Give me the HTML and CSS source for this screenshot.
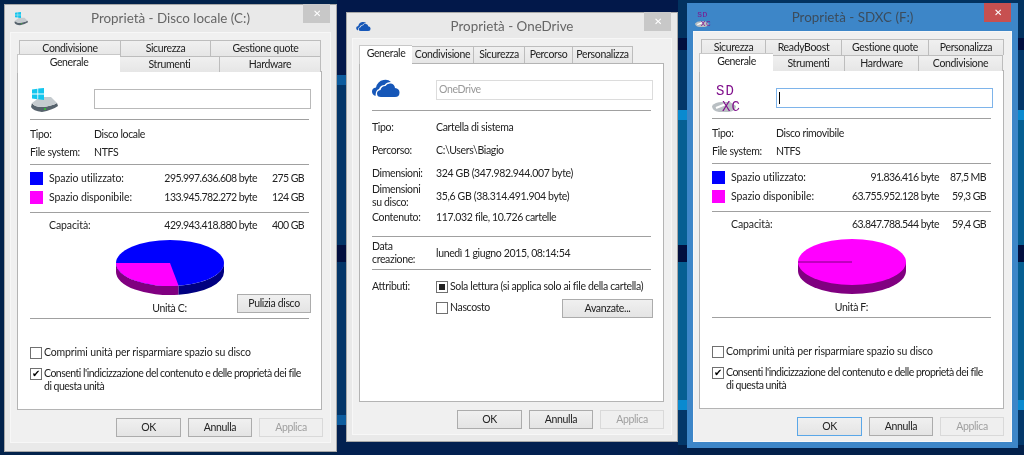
FILE: index.html
```html
<!DOCTYPE html>
<html>
<head>
  <title>Proprietà</title>
  <link rel="stylesheet" href="styles.css">
</head>
<body>

  <svg class="defs" width="0" height="0">
    <symbol id="ico-drive" viewBox="0 0 28 25">
      <path d="M2 15 Q4 19 12 19 Q22 18 27 15 L28 18 Q22 22 12 24 Q3 23 1 19 Z" fill="#56626c"/>
      <path d="M2 15 L10 9 H21 L27 15 Q22 18 12 19 Q4 19 2 15 Z" fill="#c5cbcf"/>
      <rect x="14" y="20" width="2" height="2" fill="#35b53a"/>
    </symbol>
    <symbol id="ico-win" viewBox="0 0 12 12">
      <path d="M0 1.5 L5.4 .7 V5.6 H0 Z M6.2 .6 L12 0 V5.6 H6.2 Z M0 6.4 H5.4 V11.2 L0 10.5 Z M6.2 6.4 H12 V12 L6.2 11.3 Z" fill="#14c6ee"/>
    </symbol>
    <symbol id="ico-cloud" viewBox="0 0 28 19">
      <path d="M3.5 18 Q0 16.5 0 13.5 Q0 10 4 9.5 Q5.5 3 11.5 2 Q16 1 19 4 Q14.5 4 12.5 7 Q8.5 7 7 11 Q3.5 12 3.5 18 Z" fill="#1657b8"/>
      <path d="M9 19 Q5 19 5 15.5 Q5 12.5 8.5 12 Q9.5 8 13.5 8 Q15 5 19 5.5 Q22.5 6 23 10 Q27.5 10.5 27.5 14.5 Q27.5 19 23 19 Z" fill="#1657b8"/>
    </symbol>
    <symbol id="ico-disc" viewBox="0 0 30 32">
      <path d="M0 24 Q3 20 10 20 H18 L24 24 Q24 29 17 30 H7 Q0 29 0 24 Z" fill="#b9bfc3"/>
      <path d="M4 26 L14 22" stroke="#fff" stroke-width="2"/>
    </symbol>
  </svg>

  <!-- finestra disco C -->
  <section class="win win-c">
    <header class="titlebar">
      <span class="title-icon">
        <svg class="small-drive"><use href="#ico-drive"/></svg>
        <svg class="small-win"><use href="#ico-win"/></svg>
      </span>
      <span class="title">Proprietà - Disco locale (C:)</span>
      <span class="close">✕</span>
    </header>
    <div class="panel">
      <div class="tabs">
        <div class="tab-row back tabs-c-top">
          <span class="tab">Condivisione</span>
          <span class="tab">Sicurezza</span>
          <span class="tab">Gestione quote</span>
        </div>
        <div class="tab-row tabs-c-bottom">
          <span class="tab active">Generale</span>
          <span class="tab">Strumenti</span>
          <span class="tab">Hardware</span>
        </div>
      </div>
      <div class="page">
        <div class="head">
          <span class="big-icon">
            <svg class="big-drive"><use href="#ico-drive"/></svg>
            <svg class="big-win"><use href="#ico-win"/></svg>
          </span>
          <div class="namebox"></div>
        </div>
        <hr>
        <div class="info first"><span>Tipo:</span><span>Disco locale</span></div>
        <div class="info"><span>File system:</span><span>NTFS</span></div>
        <hr class="sep-stats">
        <div class="stat"><i class="swatch used"></i><span>Spazio utilizzato:</span><span class="num">295.997.636.608 byte</span><span class="num">275 GB</span></div>
        <div class="stat"><i class="swatch free"></i><span>Spazio disponibile:</span><span class="num">133.945.782.272 byte</span><span class="num">124 GB</span></div>
        <hr class="sep-cap">
        <div class="stat capacity"><i></i><span>Capacità:</span><span class="num">429.943.418.880 byte</span><span class="num">400 GB</span></div>
        <div class="chart">
          <svg class="pie" viewBox="0 0 108 55">
            <path d="M0 23 v9 A54 23 0 0 0 62.6 54.7 v-9 A54 23 0 0 1 0 23 Z" fill="#800080"/>
            <path d="M62.6 45.7 v9 A54 23 0 0 0 108 32 v-9 A54 23 0 0 1 62.6 45.7 Z" fill="#000080"/>
            <ellipse cx="54" cy="23" rx="54" ry="23" fill="#0000ff"/>
            <path d="M54 23 L0 23 A54 23 0 0 0 62.6 45.7 Z" fill="#ff00ff"/>
          </svg>
          <span class="unit">Unità C:</span>
          <button class="btn clean">Pulizia disco</button>
        </div>
        <hr class="sep-chart">
        <label class="check first-check"><i class="box"></i><span>Comprimi unità per risparmiare spazio su disco</span></label>
        <label class="check index-check"><i class="box checked">✔</i><span>Consenti l'indicizzazione del contenuto e delle proprietà dei file<br>di questa unità</span></label>
      </div>
      <footer class="actions">
        <button class="btn">OK</button>
        <button class="btn">Annulla</button>
        <button class="btn off">Applica</button>
      </footer>
    </div>
  </section>

  <!-- finestra OneDrive -->
  <section class="win win-o">
    <header class="titlebar">
      <span class="title-icon"><svg class="small-cloud"><use href="#ico-cloud"/></svg></span>
      <span class="title">Proprietà - OneDrive</span>
      <span class="close">✕</span>
    </header>
    <div class="panel">
      <div class="tabs">
        <div class="tab-row tabs-o">
          <span class="tab active">Generale</span>
          <span class="tab">Condivisione</span>
          <span class="tab">Sicurezza</span>
          <span class="tab">Percorso</span>
          <span class="tab">Personalizza</span>
        </div>
      </div>
      <div class="page page-o">
        <div class="head">
          <span class="big-icon"><svg class="big-cloud"><use href="#ico-cloud"/></svg></span>
          <div class="namebox muted">OneDrive</div>
        </div>
        <hr>
        <div class="info o-first"><span>Tipo:</span><span>Cartella di sistema</span></div>
        <div class="info o-row"><span>Percorso:</span><span>C:\Users\Biagio</span></div>
        <div class="info o-row"><span>Dimensioni:</span><span>324 GB (347.982.944.007 byte)</span></div>
        <div class="info o-double"><span>Dimensioni<br>su disco:</span><span>35,6 GB (38.314.491.904 byte)</span></div>
        <div class="info o-last"><span>Contenuto:</span><span>117.032 file, 10.726 cartelle</span></div>
        <hr class="sep-date">
        <div class="info o-double o-date"><span>Data<br>creazione:</span><span>lunedì 1 giugno 2015, 08:14:54</span></div>
        <hr class="sep-attr">
        <div class="attrs">
          <span>Attributi:</span>
          <div class="attr-list">
            <label class="check"><i class="box partial"></i><span>Sola lettura (si applica solo ai file della cartella)</span></label>
            <div class="attr-last">
              <label class="check"><i class="box"></i><span>Nascosto</span></label>
              <button class="btn advanced">Avanzate...</button>
            </div>
          </div>
        </div>
      </div>
      <footer class="actions">
        <button class="btn">OK</button>
        <button class="btn">Annulla</button>
        <button class="btn off">Applica</button>
      </footer>
    </div>
  </section>

  <!-- finestra SDXC, attiva -->
  <section class="win win-f">
    <header class="titlebar">
      <span class="title-icon">
        <svg class="small-sd" viewBox="0 0 30 32">
          <use href="#ico-disc" width="30" height="32"/>
          <text x="4" y="13" class="sd-text">SD</text>
          <text x="10" y="29" class="sd-text">XC</text>
        </svg>
      </span>
      <span class="title">Proprietà - SDXC (F:)</span>
      <span class="close">✕</span>
    </header>
    <div class="panel">
      <div class="tabs">
        <div class="tab-row back tabs-f-top">
          <span class="tab">Sicurezza</span>
          <span class="tab">ReadyBoost</span>
          <span class="tab">Gestione quote</span>
          <span class="tab">Personalizza</span>
        </div>
        <div class="tab-row tabs-f-bottom">
          <span class="tab active">Generale</span>
          <span class="tab">Strumenti</span>
          <span class="tab">Hardware</span>
          <span class="tab">Condivisione</span>
        </div>
      </div>
      <div class="page">
        <div class="head">
          <span class="big-icon">
            <svg class="big-sd" viewBox="0 0 30 32">
              <use href="#ico-disc" width="30" height="32"/>
              <text x="4" y="13" class="sd-text">SD</text>
              <text x="10" y="29" class="sd-text">XC</text>
            </svg>
          </span>
          <div class="namebox focus"><i class="caret"></i></div>
        </div>
        <hr>
        <div class="info first"><span>Tipo:</span><span>Disco rimovibile</span></div>
        <div class="info"><span>File system:</span><span>NTFS</span></div>
        <hr class="sep-stats">
        <div class="stat"><i class="swatch used"></i><span>Spazio utilizzato:</span><span class="num">91.836.416 byte</span><span class="num">87,5 MB</span></div>
        <div class="stat"><i class="swatch free"></i><span>Spazio disponibile:</span><span class="num">63.755.952.128 byte</span><span class="num">59,3 GB</span></div>
        <hr class="sep-cap">
        <div class="stat capacity"><i></i><span>Capacità:</span><span class="num">63.847.788.544 byte</span><span class="num">59,4 GB</span></div>
        <div class="chart">
          <svg class="pie" viewBox="0 0 108 55">
            <path d="M0 23 v9 A54 23 0 0 0 108 32 v-9 Z" fill="#800080"/>
            <ellipse cx="54" cy="23" rx="54" ry="23" fill="#ff00ff"/>
            <path d="M0 23 H54" stroke="#800080" stroke-width="1"/>
          </svg>
          <span class="unit">Unità F:</span>
        </div>
        <hr class="sep-chart">
        <label class="check first-check"><i class="box"></i><span>Comprimi unità per risparmiare spazio su disco</span></label>
        <label class="check index-check"><i class="box checked">✔</i><span>Consenti l'indicizzazione del contenuto e delle proprietà dei file<br>di questa unità</span></label>
      </div>
      <footer class="actions">
        <button class="btn default">OK</button>
        <button class="btn">Annulla</button>
        <button class="btn off">Applica</button>
      </footer>
    </div>
  </section>

</body>
</html>
```

FILE: styles.css
```css
* {
  box-sizing: border-box;
}

html, body {
  height: 100%;
}

body {
  margin: 0;
  overflow: hidden;
  position: relative;
  font: 10.5px/13px Lato, "Open Sans", sans-serif;
  letter-spacing: -.35px;
  color: #222;
  background-color: #03234c;
  background-image:
    linear-gradient(180deg,
      #023260 0, #023260 38px, #010f3f 38px, #010f3f 50px, #03386a 50px, #03386a 110px,
      #0a8ad0 110px, #0a8ad0 120px, #065f92 120px, #065f92 245px, #010f3f 245px, #010f3f 262px,
      #065f92 262px, #065f92 400px, #0a8ad0 400px, #0a8ad0 410px, #03386a 410px, #03386a 445px, #02204a 445px),
    linear-gradient(180deg,
      #02184a 0, #02184a 75px, #0d5c9e 75px, #0d5c9e 85px, #033568 85px, #033568 245px,
      #010f3f 245px, #010f3f 262px, #033568 262px, #033568 415px, #0d5c9e 415px, #0d5c9e 425px,
      #022050 425px);
  background-repeat: no-repeat;
  background-size: 346px 455px, 342px 455px;
  background-position: 678px 0, 337px 0;
}

.defs {
  position: absolute;
}

/* finestre */
.win {
  position: absolute;
  display: flex;
  flex-direction: column;
  background: #e9e9e9;
  border: 1px solid #a8a8a8;
  filter: blur(.35px);
}

.win-c {
  left: 4px;
  top: 4px;
  width: 333px;
  height: 448px;
}

.win-o {
  left: 346px;
  top: 12px;
  width: 332px;
  height: 430px;
}

.win-f {
  left: 687px;
  top: 3px;
  width: 331px;
  height: 445px;
  background: #3d86c8;
  border-color: #3d86c8;
}

.titlebar {
  height: 27px;
  flex: none;
  display: flex;
  justify-content: center;
  padding-top: 3px;
  position: relative;
}

.win-o .titlebar {
  height: 25px;
}

.title {
  font-size: 13.4px;
  line-height: 20px;
  letter-spacing: 0;
  color: #666;
}

.win-f .title {
  color: #3c4c5c;
}

.title-icon {
  position: absolute;
  left: 8px;
  top: 6px;
  width: 16px;
  height: 16px;
}

.title-icon svg {
  position: absolute;
}

.small-drive {
  left: 1px;
  top: 2px;
  width: 14px;
  height: 13px;
}

.small-win {
  left: 2px;
  top: 1px;
  width: 6px;
  height: 6px;
}

.small-cloud {
  left: 1px;
  top: 2px;
  width: 15px;
  height: 10px;
}

.small-sd {
  left: -1px;
  top: 0;
  width: 17px;
  height: 18px;
}

.close {
  position: absolute;
  right: 6px;
  top: -1px;
  width: 27px;
  height: 19px;
  background: #c8c8c8;
  color: #fff;
  font-size: 10px;
  line-height: 19px;
  text-align: center;
}

.win-f .close {
  background: #c75050;
}

.panel {
  flex: 1;
  margin: 0 5px 8px 5px;
  padding: 7px 7px 0 6px;
  background: #f0f0f0;
  border: 1px solid #f7f7f7;
}

.win-o .panel {
  margin-bottom: 6px;
}

.win-f .panel {
  padding-left: 5px;
  margin-bottom: 5px;
}

/* linguette */
.tab-row {
  display: grid;
  height: 15px;
  position: relative;
}

.tab-row.back {
  height: 16px;
  margin-left: 2px;
}

.tabs-c-top {
  grid-template-columns: 102px 90px 110px;
}

.tabs-c-bottom {
  grid-template-columns: 103px 100px 101px;
}

.tabs-f-top {
  grid-template-columns: 65px 76px 87px 75px;
}

.tabs-f-bottom {
  grid-template-columns: 74px 72px 74px 84px;
}

.tabs-o {
  height: 17px;
  margin-left: 1px;
  grid-template-columns: 52px 62px 51px 48px 60px;
}

.tab {
  border: 1px solid #bdbdbd;
  border-bottom: 0;
  border-left: 0;
  background: linear-gradient(#f0f0f0, #e6e6e6);
  text-align: center;
  line-height: 15px;
  white-space: nowrap;
}

.tab:first-child {
  border-left: 1px solid #bdbdbd;
}

.tab.active {
  margin: -2px 0 -1px 0;
  background: #fff;
  border-color: #c8c8c8;
  border-right: 0;
  position: relative;
  line-height: 14px;
}

.tabs-o .tab.active {
  margin: -1px 0 -1px -1px;
}

/* pagina */
.page {
  width: 305px;
  height: 339px;
  padding: 17px 10px 0 12px;
  background: #fff;
  border: 1px solid #b4b4b4;
}

.page-o {
  padding-top: 16px;
}

.head {
  display: flex;
  height: 20px;
  gap: 36px;
  width: 281px;
}

.big-icon {
  width: 28px;
  height: 25px;
  flex: none;
  position: relative;
}

.big-icon svg {
  position: absolute;
}

.big-drive {
  left: 0;
  top: -1px;
  width: 28px;
  height: 25px;
}

.big-win {
  left: 2px;
  top: -1px;
  width: 12px;
  height: 12px;
}

.big-cloud {
  left: 0;
  top: -2px;
  width: 28px;
  height: 19px;
}

.big-sd {
  left: 0;
  top: -6px;
  width: 30px;
  height: 32px;
}

.sd-text {
  font: 14px "Liberation Mono", monospace;
  letter-spacing: 1px;
  fill: #80108c;
}

.namebox {
  flex: 1;
  border: 1px solid #b9b9b9;
  background: #fff;
  padding: 2px 2px;
}

.namebox.muted {
  color: #999;
  border-color: #dcdcdc;
}

.namebox.focus {
  border-color: #7eb4ea;
  padding: 3px 2px;
}

.caret {
  display: block;
  width: 1px;
  height: 12px;
  background: #000;
}

hr {
  width: 279px;
  height: 1px;
  margin: 10px 0 0 0;
  border: 0;
  background: #a0a0a0;
}

.info {
  display: grid;
  grid-template-columns: 64px 1fr;
  align-items: center;
  height: 18px;
}

.info.first {
  margin-top: 5px;
}

.sep-stats {
  margin-top: 3px;
}

.stat {
  display: grid;
  grid-template-columns: 19px 1fr auto 47px;
  align-items: center;
  height: 19px;
  width: 274px;
  letter-spacing: -.1px;
}

.sep-stats + .stat {
  margin-top: 4px;
}

.num {
  text-align: right;
  letter-spacing: -.55px;
}

.swatch {
  display: block;
  width: 13px;
  height: 13px;
}

.used {
  background: #0000ff;
}

.free {
  background: #ff00ff;
}

.sep-cap {
  margin-top: 5px;
}

.capacity {
  margin-top: 3px;
  height: 18px;
}

.chart {
  display: grid;
  grid-template-columns: 1fr auto 1fr;
  margin-top: 6px;
  width: 279px;
  height: 78px;
}

.pie {
  grid-column: 2;
  width: 108px;
  height: 55px;
}

.unit {
  grid-column: 2;
  text-align: center;
  margin-top: 3px;
}

.clean {
  grid-column: 3;
  grid-row: 1 / span 2;
  width: 74px;
  justify-self: end;
  align-self: end;
  margin: 0 -2px 5px 0;
}

.sep-chart {
  margin-top: 0;
}

.check {
  display: grid;
  grid-template-columns: 14px 1fr;
  width: 278px;
  margin-top: 8px;
}

.first-check {
  margin-top: 27px;
  letter-spacing: -.15px;
}

.index-check {
  letter-spacing: -.5px;
}

.box {
  width: 12px;
  height: 12px;
  margin-top: 1px;
  border: 1px solid #707070;
  background: #fff;
  display: block;
  font: normal 10px/10px "DejaVu Sans", sans-serif;
  color: #000;
  text-align: center;
}

.partial::after {
  content: "";
  display: block;
  width: 6px;
  height: 6px;
  margin: 2px;
  background: #222;
}

/* pulsanti */
.btn {
  height: 19px;
  padding: 0;
  font: inherit;
  letter-spacing: inherit;
  color: #222;
  background: linear-gradient(#f0f0f0, #e4e4e4);
  border: 1px solid #acacac;
}

.btn.off {
  color: #a0a0a0;
  border-color: #d9d9d9;
  background: #efefef;
}

.btn.default {
  border-color: #5aa7e8;
}

.actions {
  display: flex;
  justify-content: flex-end;
  gap: 7px;
  margin-top: 8px;
}

.actions .btn {
  width: 64px;
}

.actions .btn:first-child {
  width: 65px;
}

/* OneDrive */
.o-first {
  margin-top: 5px;
  height: 23px;
}

.o-row {
  height: 23px;
}

.o-double {
  height: 26px;
  margin-top: -2px;
}

.o-last {
  height: 20px;
  margin-top: -2px;
}

.sep-date {
  margin-top: 9px;
}

.o-date {
  margin-top: 3px;
}

.sep-attr {
  margin-top: 3px;
}

.attrs {
  display: grid;
  grid-template-columns: 64px 1fr;
  margin-top: 10px;
}

.attr-list .check {
  margin-top: 0;
  width: auto;
  white-space: nowrap;
}

.attr-last {
  display: flex;
  justify-content: space-between;
  margin-top: 8px;
}

.advanced {
  width: 91px;
  margin-top: -2px;
}
```
